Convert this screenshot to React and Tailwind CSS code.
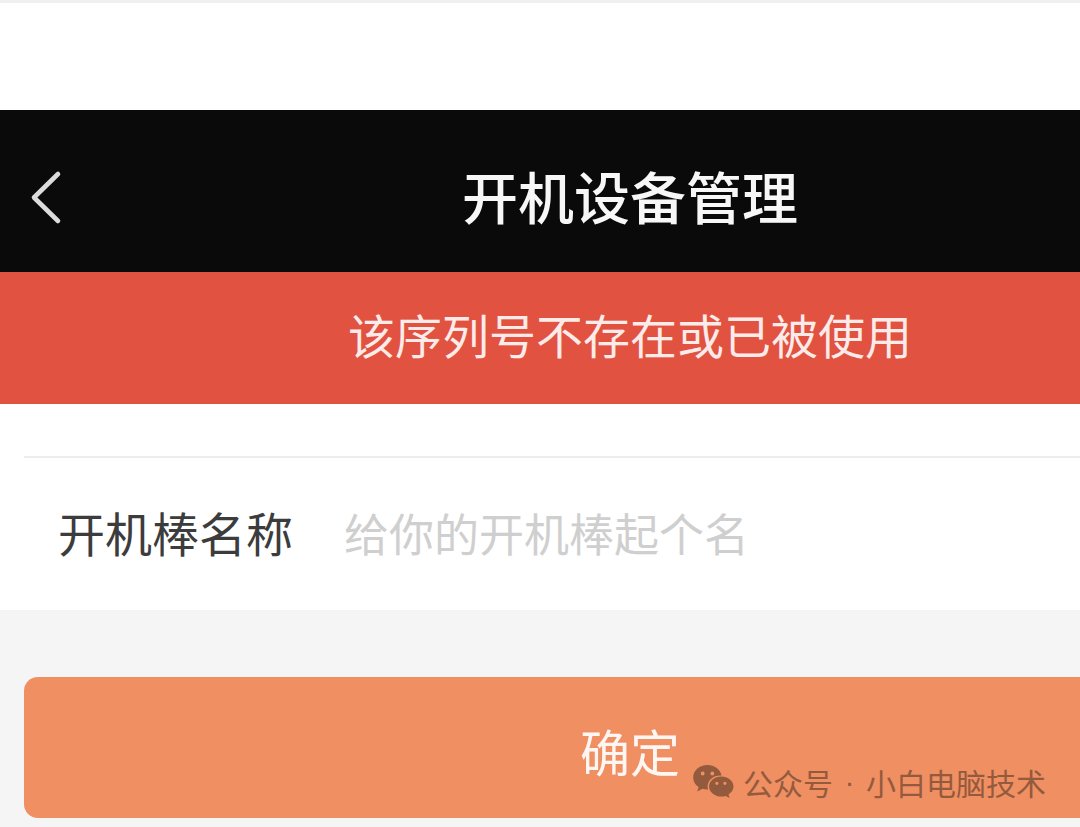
import { useState } from 'react';

function BackIcon() {
  return (
    <svg width="36" height="60" viewBox="0 0 36 60" fill="none" aria-hidden="true">
      <path
        d="M30 9 6 32.500 30 56"
        stroke="#DCDCDC"
        strokeWidth="4.6"
        strokeLinecap="round"
        strokeLinejoin="round"
      />
    </svg>
  );
}

function WechatIcon() {
  return (
    <svg width="42" height="34" viewBox="0 0 42 34" fill="currentColor" aria-hidden="true">
      <path
        fillRule="evenodd"
        d="M14.6 0C6.5 0 0.2 5.5 0.2 12.4c0 4 2 7.3 5.4 9.7L4.3 26.4l5.1-2.6c1.9.5 3.7.9 5.7.8-.3-1-.5-2.1-.5-3.2 0-6.200 5.600-11 12.700-11h1.300C27.300 4.300 21.500 0 14.600 0ZM9.700 6.600a1.900 1.900 0 1 1 0 3.800 1.900 1.900 0 0 1 0-3.800ZM19.300 6.600a1.900 1.900 0 1 1 0 3.800 1.900 1.900 0 0 1 0-3.800Z"
      />
      <path
        fillRule="evenodd"
        d="M28.300 11.500c-6.900 0-12.200 4.500-12.200 10s5.300 10.100 12.200 10.100c1.500 0 3-.3 4.400-.7l3.900 2.200-1.100-3.600c3.100-2 5-4.800 5-8 0-5.500-5.400-10-12.200-10ZM23.900 16.700a1.600 1.600 0 1 1 0 3.200 1.600 1.600 0 0 1 0-3.200ZM31.900 16.700a1.600 1.600 0 1 1 0 3.200 1.600 1.600 0 0 1 0-3.200Z"
      />
    </svg>
  );
}

export default function App() {
  const [name, setName] = useState('');

  const submit = (e) => {
    e.preventDefault();
  };

  return (
    <div className="min-h-screen overflow-hidden bg-[#F5F5F5] font-['Noto_Sans_CJK_SC',sans-serif]">
      <div className="h-[110px] border-t-3 border-[#F0F0F0] bg-white" />

      <header className="flex h-[162px] items-center bg-[#0A0A0A] pt-2">
        <button type="button" aria-label="返回" className="w-[180px] pl-7">
          <BackIcon />
        </button>
        <h1 className="flex-1 text-center text-[56px] leading-[80px] font-medium text-[#F7F7F7]">
          开机设备管理
        </h1>
      </header>

      <p role="alert" className="bg-[#E15241] pt-7 pb-9 pl-[180px] text-center text-[47px] leading-[68px] text-[#FCEBE9]">
        该序列号不存在或已被使用
      </p>

      <form onSubmit={submit}>
        <div className="bg-white pt-[52px] pl-6">
          <div className="flex items-center border-t-2 border-[#EDEDED] pt-10 pb-11 pl-[34px]">
            <label htmlFor="name" className="w-[286px] shrink-0 text-[47px] leading-[68px] text-[#3C3C3C]">
              开机棒名称
            </label>
            <input
              id="name"
              type="text"
              value={name}
              onChange={(e) => setName(e.target.value)}
              placeholder="给你的开机棒起个名"
              className="h-[68px] min-w-0 flex-1 bg-transparent text-[45px] text-[#3C3C3C] outline-none placeholder:text-[#CFCFCF]"
            />
          </div>
        </div>

        <div className="relative pt-[67px] pb-[9px] pl-6">
          <button
            type="submit"
            className="h-[141px] w-full rounded-l-[14px] bg-[#F08F62] pt-1 pl-[156px] text-[50px] leading-[68px] text-[#FEF6F2]"
          >
            确定
          </button>
          <div className="absolute right-[34px] bottom-[23px] flex items-center gap-2 text-[#945A3E]">
            <WechatIcon />
            <span className="flex text-[30px] leading-[44px]">
              公众号<span className="w-[33px] text-center font-['Liberation_Sans',sans-serif]">·</span>小白电脑技术
            </span>
          </div>
        </div>
      </form>
    </div>
  );
}
